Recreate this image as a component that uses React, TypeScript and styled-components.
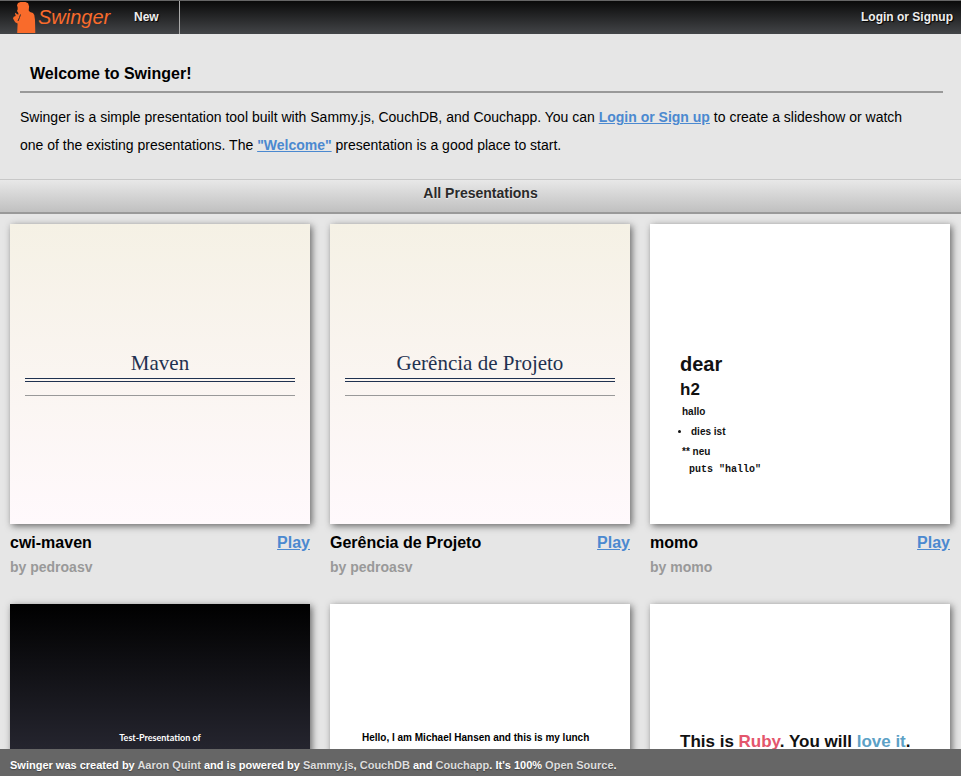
import React from 'react';
import styled, { createGlobalStyle } from 'styled-components';

const GlobalStyle = createGlobalStyle`
  *, *::before, *::after { box-sizing: border-box; }
  body {
    margin: 0;
    background: #e6e6e6;
    color: #000;
    font-family: "Liberation Sans", Arial, sans-serif;
  }
  h1, h2, h3, p, ul, pre, hr { margin: 0; padding: 0; }
  a { color: #4b89d0; }
`;

const Page = styled.div`
  display: flex;
  flex-direction: column;
  height: 100vh;
`;

const Header = styled.header`
  display: flex;
  flex: none;
  height: 34px;
  border-top: 1px solid #666;
  background: linear-gradient(#0a0a0a, #434548);
`;

const Brand = styled.a`
  display: flex;
  align-items: flex-end;
  padding-left: 12px;
`;

const Wordmark = styled.text`
  fill: #f96b2b;
  font: italic 20px "Liberation Sans", Arial, sans-serif;
`;

const Nav = styled.nav`
  display: flex;
  flex: 1;
  justify-content: space-between;
`;

const NavLink = styled.a<{ $divided?: boolean }>`
  padding: ${(p) => (p.$divided ? '0 20px 0 19px' : '0 8px')};
  border-right: ${(p) => (p.$divided ? '1px solid #aaa' : '0')};
  color: #eee;
  font-size: 12px;
  font-weight: bold;
  line-height: 32px;
  text-decoration: none;
  text-shadow: 1px 1px 1px #000;
`;

const Content = styled.main`
  flex: 1;
  min-height: 0;
  overflow-y: auto;
  scrollbar-width: none;
`;

const Intro = styled.section`
  padding: 20px 18px 20px 20px;
`;

const IntroTitle = styled.h1`
  padding: 3px 10px 0;
  border-bottom: 2px solid #999;
  font-size: 16px;
  line-height: 34px;
`;

const IntroText = styled.p`
  padding: 10px 20px 0 0;
  font-size: 14px;
  line-height: 28px;

  a { font-weight: bold; }
`;

const SectionTitle = styled.h2`
  height: 35px;
  border-top: 1px solid #c8c8c8;
  border-bottom: 2px solid #999;
  background: linear-gradient(#e8e8e8, #c0c0c0);
  color: #2a2a2a;
  font-size: 14px;
  line-height: 26px;
  text-align: center;
  text-shadow: 0 1px 1px #eee;
`;

const Gallery = styled.section`
  display: grid;
  grid-template-columns: repeat(auto-fill, 300px);
  gap: 26px 20px;
  padding: 10px;
`;

const Card = styled.article`
  display: flex;
  flex-direction: column;
`;

const CardRow = styled.div`
  display: flex;
  justify-content: space-between;
  padding-top: 6px;
  font-size: 16px;
  font-weight: bold;
  line-height: 26px;
`;

const CardTitle = styled.h3`
  font-size: 16px;
`;

const Author = styled.p`
  color: #999;
  font-size: 14px;
  font-weight: bold;
  line-height: 22px;
`;

const themes = {
  cream: 'linear-gradient(#f5f1e5, #fff9fc)',
  white: '#fff',
  dark: 'linear-gradient(#000, #4c4c60)',
};

const Slide = styled.div<{ $theme: keyof typeof themes }>`
  height: 300px;
  padding: 126px 15px 0;
  overflow: hidden;
  background: ${(p) => themes[p.$theme]};
  box-shadow: 2px 2px 7px #666;
`;

const SerifTitle = styled.h3`
  padding-bottom: 1px;
  border-bottom: 4px double #1f3150;
  color: #1f3150;
  font: 21px/27px "Liberation Serif", Georgia, serif;
  text-align: center;
`;

const Rule = styled.hr`
  margin-top: 13px;
  border: 0;
  border-top: 1px solid #999;
`;

const SlideBody = styled.div`
  padding: 0 15px;
  color: #111;
  font-weight: bold;
`;

const Heading = styled.h3<{ $small?: boolean }>`
  font-size: ${(p) => (p.$small ? 17 : 20)}px;
  line-height: ${(p) => (p.$small ? 24 : 28)}px;
`;

const SlideText = styled.p`
  padding: 0 2px;
  font-size: 10px;
  line-height: 20px;
`;

const SlideList = styled.ul`
  padding-left: 11px;
  font-size: 10px;
  line-height: 20px;
`;

const Code = styled.pre`
  padding-left: 9px;
  font: bold 10px/16px "Liberation Mono", monospace;
`;

const LunchText = styled.p`
  padding: 0 17px;
  color: #000;
  font-size: 10px;
  font-weight: bold;
  line-height: 16px;
`;

const DarkText = styled.p`
  color: #fff;
  font: bold 9px/16px Lato, sans-serif;
  text-align: center;
`;

const Accent = styled.span<{ $tone: 'red' | 'blue' }>`
  color: ${(p) => (p.$tone === 'red' ? '#e4566c' : '#5ca1c6')};
`;

const Footer = styled.footer`
  flex: none;
  padding: 5px 10px 0;
  background: #666;
  color: #fff;
  font-size: 11px;
  font-weight: bold;
  line-height: 22px;
  text-shadow: 0 1px 1px #444;

  a { color: #ddd; text-decoration: none; }
`;

const Logo = () => (
  <svg width="103" height="33" viewBox="0 0 103 33" role="img" aria-label="Swinger">
    <path
      fill="#f96b2b"
      d="M5.6 6.2 5 4.2 6 2 8.5 1h5l2.6 1.2 1 3.2-.4 4.2L18 11l3 1 1.3 2 .7 5 .3 13H5.2l.4-9.5-2.4-1.3L1 17.4l.7-1.6 2-.8L3 12.5l.6-.8 1.4 1.6 1.6.2-.4-1.7L5 10l.7-1.8z"
    />
    <path fill="none" stroke="#2a2b2d" strokeWidth="1" d="M8.5 13.5 7.5 16.5 6 20" />
    <Wordmark x="26" y="23">Swinger</Wordmark>
  </svg>
);

const MarkdownSlide = () => (
  <Slide $theme="white">
    <SlideBody>
      <Heading>dear</Heading>
      <Heading $small>h2</Heading>
      <SlideText>hallo</SlideText>
      <SlideList><li>dies ist</li></SlideList>
      <SlideText>** neu</SlideText>
      <Code>puts "hallo"</Code>
    </SlideBody>
  </Slide>
);

const SerifSlide = ({ title }: { title: string }) => (
  <Slide $theme="cream">
    <SerifTitle>{title}</SerifTitle>
    <Rule />
  </Slide>
);

const Presentation = ({ title, author, children }: {
  title: string;
  author: string;
  children: React.ReactNode;
}) => (
  <Card>
    {children}
    <CardRow>
      <CardTitle>{title}</CardTitle>
      <a href="#play">Play</a>
    </CardRow>
    <Author>by {author}</Author>
  </Card>
);

export default function App() {
  return (
    <Page>
      <GlobalStyle />
      <Header>
        <Brand href="#home"><Logo /></Brand>
        <Nav>
          <NavLink $divided href="#new">New</NavLink>
          <NavLink href="#login">Login or Signup</NavLink>
        </Nav>
      </Header>
      <Content>
        <Intro>
          <IntroTitle>Welcome to Swinger!</IntroTitle>
          <IntroText>
            Swinger is a simple presentation tool built with Sammy.js, CouchDB, and Couchapp. You can{' '}
            <a href="#login">Login or Sign up</a> to create a slideshow or watch one of the existing
            presentations. The <a href="#welcome">"Welcome"</a> presentation is a good place to start.
          </IntroText>
        </Intro>
        <SectionTitle>All Presentations</SectionTitle>
        <Gallery>
          <Presentation title="cwi-maven" author="pedroasv"><SerifSlide title="Maven" /></Presentation>
          <Presentation title="Gerência de Projeto" author="pedroasv">
            <SerifSlide title="Gerência de Projeto" />
          </Presentation>
          <Presentation title="momo" author="momo"><MarkdownSlide /></Presentation>
          <Slide $theme="dark"><DarkText>Test-Presentation of</DarkText></Slide>
          <Slide $theme="white">
            <LunchText>Hello, I am Michael Hansen and this is my lunch talk</LunchText>
          </Slide>
          <Slide $theme="white">
            <SlideBody>
              <Heading $small>
                This is <Accent $tone="red">Ruby</Accent>. You will <Accent $tone="blue">love it</Accent>.
              </Heading>
            </SlideBody>
          </Slide>
        </Gallery>
      </Content>
      <Footer>
        Swinger was created by <a href="#aaron">Aaron Quint</a> and is powered by{' '}
        <a href="#sammy">Sammy.js</a>, <a href="#couchdb">CouchDB</a> and{' '}
        <a href="#couchapp">Couchapp</a>. It's 100% <a href="#source">Open Source</a>.
      </Footer>
    </Page>
  );
}
